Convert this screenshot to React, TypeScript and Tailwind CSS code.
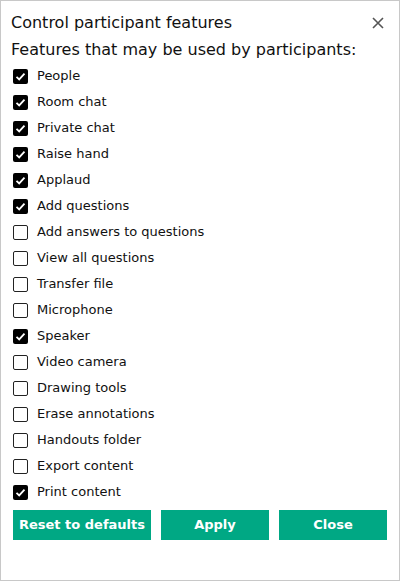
const items: { label: string; checked: boolean }[] = [
  { label: "People", checked: true },
  { label: "Room chat", checked: true },
  { label: "Private chat", checked: true },
  { label: "Raise hand", checked: true },
  { label: "Applaud", checked: true },
  { label: "Add questions", checked: true },
  { label: "Add answers to questions", checked: false },
  { label: "View all questions", checked: false },
  { label: "Transfer file", checked: false },
  { label: "Microphone", checked: false },
  { label: "Speaker", checked: true },
  { label: "Video camera", checked: false },
  { label: "Drawing tools", checked: false },
  { label: "Erase annotations", checked: false },
  { label: "Handouts folder", checked: false },
  { label: "Export content", checked: false },
  { label: "Print content", checked: true },
];

const Box = ({ checked }: { checked: boolean }) =>
  checked ? (
    <span className="w-[15px] h-[15px] rounded-[2px] bg-black flex items-center justify-center shrink-0">
      <svg width="11" height="11" viewBox="0 0 11 11">
        <path d="M1.5 5.8 L4.2 8.4 L9.5 2.6" stroke="white" strokeWidth="1.8" fill="none" />
      </svg>
    </span>
  ) : (
    <span className="w-[15px] h-[15px] rounded-[2px] border-[1.5px] border-[#222] bg-white shrink-0" />
  );

const App = () => {
  return (
    <div
      className="w-[400px] h-[581px] border border-[#c8c8c8] bg-white text-[#111] flex flex-col"
      style={{ fontFamily: '"DejaVu Sans", sans-serif' }}
    >
      <div className="flex items-center justify-between pl-[10px] pr-[15px] pt-[10px] h-[33px]">
        <h1 className="text-[16px] leading-none">Control participant features</h1>
        <svg width="12" height="12" viewBox="0 0 12 12">
          <path d="M1 1 L11 11 M11 1 L1 11" stroke="#555" strokeWidth="1.6" />
        </svg>
      </div>
      <div className="pl-[10px] text-[16px] leading-none mt-[8px] mb-[5px]">
        Features that may be used by participants:
      </div>
      <ul className="flex flex-col">
        {items.map((it) => (
          <li key={it.label} className="h-[26px] flex items-center gap-[9px] pl-[12px] text-[13px]">
            <Box checked={it.checked} />
            <span>{it.label}</span>
          </li>
        ))}
      </ul>
      <div className="flex gap-[10px] pl-[12px] mt-[5px]">
        <button className="w-[138px] h-[30px] bg-[#00a884] text-white font-bold text-[13px]">
          Reset to defaults
        </button>
        <button className="w-[108px] h-[30px] bg-[#00a884] text-white font-bold text-[13px]">
          Apply
        </button>
        <button className="w-[108px] h-[30px] bg-[#00a884] text-white font-bold text-[13px]">
          Close
        </button>
      </div>
    </div>
  );
};

export default App;
